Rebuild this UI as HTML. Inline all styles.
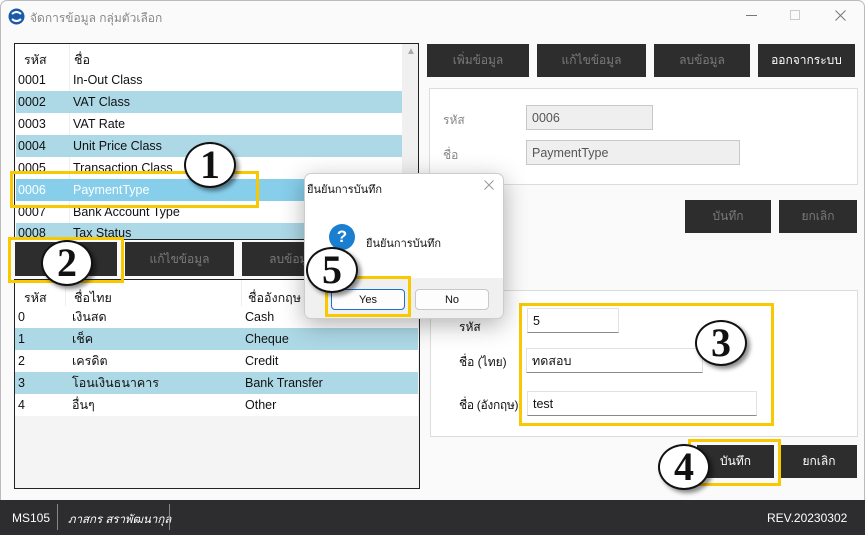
<!DOCTYPE html>
<html><head><meta charset="utf-8"><style>
*{box-sizing:border-box;margin:0;padding:0}
body{width:865px;height:535px;overflow:hidden;background:#fafafa;font-family:"Liberation Sans","Noto Sans CJK SC",sans-serif;font-size:12.5px;color:#111;position:relative}
.a{position:absolute}
.btn{position:absolute;background:#2d2d2d;color:#7a7a7a;display:flex;align-items:center;justify-content:center;font-size:12px}
.row{position:absolute;left:16px;height:22px;display:flex;align-items:center}
.c{position:absolute;white-space:nowrap}
.inp{position:absolute;background:#fff;border:1px solid #e2e2e2;border-bottom:1px solid #8a8a8a;padding-left:5px;display:flex;align-items:center;font-size:12.5px}
.dis{background:#efefef;border:1px solid #c8c8c8;color:#555}
.yb{position:absolute;border:3px solid #f8c800}
.num{position:absolute;width:52px;height:46px;border-radius:50%;background:#fff;border:2.5px solid #111;box-shadow:3px 3px 4px rgba(0,0,0,.45);font-family:"Liberation Serif",serif;font-weight:bold;font-size:40px;display:flex;align-items:center;justify-content:center;line-height:1}
</style></head><body>
<div class="a" style="left:0;top:0;width:865px;height:535px;border:1px solid #bbb;border-radius:7px 7px 0 0"></div>
<!-- title -->
<svg class="a" style="left:8px;top:8px" width="17" height="17" viewBox="0 0 17 17"><circle cx="8.5" cy="8.5" r="8" fill="#1a5aa8"/><path d="M4 6 Q8.5 2 13 6 M13 11 Q8.5 15 4 11" stroke="#fff" stroke-width="2" fill="none"/></svg>
<div class="c" style="left:30px;top:9px;color:#888;font-size:12px">จัดการข้อมูล กลุ่มตัวเลือก</div>
<div class="a" style="left:746px;top:15px;width:11px;height:1px;background:#777"></div>
<div class="a" style="left:790px;top:10px;width:10px;height:10px;border:1px solid #ccc"></div>
<svg class="a" style="left:835px;top:10px" width="11" height="11" viewBox="0 0 11 11"><path d="M0.5 0.5 L10.5 10.5 M10.5 0.5 L0.5 10.5" stroke="#777" stroke-width="1"/></svg>

<!-- top grid -->
<div class="a" style="left:14px;top:43px;width:405px;height:197px;border:1px solid #222;background:#fff;overflow:hidden">
 <div class="a" style="left:387px;top:0;width:17px;height:197px;background:#f0f0f0"></div>
 <div class="c" style="left:391px;top:2px;color:#aaa;font-size:10px">▲</div>
 <div class="a" style="left:54px;top:0;width:1px;height:197px;background:#eee"></div>
</div>
<div class="c" style="left:24px;top:50px">รหัส</div><div class="c" style="left:74px;top:50px">ชื่อ</div>
<div class="row" style="top:69px;width:386px"><span class="c" style="left:2px">0001</span><span class="c" style="left:57px">In-Out Class</span></div>
<div class="row" style="top:91px;width:386px;background:#add8e6"><span class="c" style="left:2px">0002</span><span class="c" style="left:57px">VAT Class</span></div>
<div class="row" style="top:113px;width:386px"><span class="c" style="left:2px">0003</span><span class="c" style="left:57px">VAT Rate</span></div>
<div class="row" style="top:135px;width:386px;background:#add8e6"><span class="c" style="left:2px">0004</span><span class="c" style="left:57px">Unit Price Class</span></div>
<div class="row" style="top:157px;width:386px"><span class="c" style="left:2px">0005</span><span class="c" style="left:57px">Transaction Class</span></div>
<div class="row" style="top:179px;width:386px;background:#87ceeb;color:#fff"><span class="c" style="left:2px">0006</span><span class="c" style="left:57px">PaymentType</span></div>
<div class="row" style="top:201px;width:386px"><span class="c" style="left:2px">0007</span><span class="c" style="left:57px">Bank Account Type</span></div>
<div class="row" style="top:223px;width:386px;height:16px;background:#add8e6;align-items:flex-start;overflow:hidden"><span class="c" style="left:2px;top:3px">0008</span><span class="c" style="left:57px;top:3px">Tax Status</span></div>

<div class="btn" style="left:15px;top:242px;width:102px;height:34px"></div>
<div class="btn" style="left:125px;top:242px;width:109px;height:34px">แก้ไขข้อมูล</div>
<div class="btn" style="left:242px;top:242px;width:100px;height:34px">ลบข้อมูล</div>

<!-- bottom grid -->
<div class="a" style="left:14px;top:279px;width:406px;height:210px;border:1px solid #222;background:#f4f4f4"></div>
<div class="a" style="left:15px;top:280px;width:404px;height:26px;background:#fff"></div>
<div class="a" style="left:65px;top:280px;width:1px;height:136px;background:#eee"></div>
<div class="a" style="left:241px;top:280px;width:1px;height:136px;background:#eee"></div>
<div class="c" style="left:24px;top:288px">รหัส</div><div class="c" style="left:74px;top:288px">ชื่อไทย</div><div class="c" style="left:248px;top:288px">ชื่ออังกฤษ</div>
<div class="row" style="left:15px;top:306px;width:403px;background:#fff"><span class="c" style="left:3px">0</span><span class="c" style="left:57px">เงินสด</span><span class="c" style="left:230px">Cash</span></div>
<div class="row" style="left:15px;top:328px;width:403px;background:#add8e6"><span class="c" style="left:3px">1</span><span class="c" style="left:57px">เช็ค</span><span class="c" style="left:230px">Cheque</span></div>
<div class="row" style="left:15px;top:350px;width:403px;background:#fff"><span class="c" style="left:3px">2</span><span class="c" style="left:57px">เครดิต</span><span class="c" style="left:230px">Credit</span></div>
<div class="row" style="left:15px;top:372px;width:403px;background:#add8e6"><span class="c" style="left:3px">3</span><span class="c" style="left:57px">โอนเงินธนาคาร</span><span class="c" style="left:230px">Bank Transfer</span></div>
<div class="row" style="left:15px;top:394px;width:403px;background:#fff"><span class="c" style="left:3px">4</span><span class="c" style="left:57px">อื่นๆ</span><span class="c" style="left:230px">Other</span></div>

<!-- right -->
<div class="btn" style="left:427px;top:44px;width:102px;height:33px">เพิ่มข้อมูล</div>
<div class="btn" style="left:537px;top:44px;width:109px;height:33px">แก้ไขข้อมูล</div>
<div class="btn" style="left:654px;top:44px;width:96px;height:33px">ลบข้อมูล</div>
<div class="btn" style="left:758px;top:44px;width:97px;height:33px;color:#fff">ออกจากระบบ</div>
<div class="a" style="left:429px;top:88px;width:429px;height:97px;border:1px solid #ddd;background:#fff"></div>
<div class="c" style="left:443px;top:111px;color:#888;font-size:12px">รหัส</div>
<div class="c" style="left:443px;top:146px;color:#888;font-size:12px">ชื่อ</div>
<div class="inp dis" style="left:526px;top:105px;width:127px;height:25px">0006</div>
<div class="inp dis" style="left:526px;top:140px;width:214px;height:25px">PaymentType</div>
<div class="btn" style="left:685px;top:200px;width:86px;height:33px">บันทึก</div>
<div class="btn" style="left:779px;top:200px;width:78px;height:33px">ยกเลิก</div>

<div class="a" style="left:430px;top:290px;width:428px;height:147px;border:1px solid #ddd;background:#fff"></div>
<div class="c" style="left:459px;top:318px;font-size:12px">รหัส</div>
<div class="c" style="left:459px;top:353px;font-size:12px">ชื่อ (ไทย)</div>
<div class="c" style="left:459px;top:396px;font-size:12px;letter-spacing:-0.3px">ชื่อ (อังกฤษ)</div>
<div class="inp" style="left:527px;top:308px;width:92px;height:25px">5</div>
<div class="inp" style="left:526px;top:348px;width:177px;height:25px">ทดสอบ</div>
<div class="inp" style="left:527px;top:391px;width:230px;height:25px">test</div>
<div class="yb" style="left:519px;top:303px;width:255px;height:123px"></div>
<div class="btn" style="left:697px;top:445px;width:77px;height:33px;color:#fff">บันทึก</div>
<div class="btn" style="left:781px;top:445px;width:76px;height:33px;color:#fff">ยกเลิก</div>
<div class="yb" style="left:688px;top:439px;width:93px;height:47px"></div>

<!-- status -->
<div class="a" style="left:0;top:500px;width:865px;height:35px;background:#2d2d30"></div>
<div class="c" style="left:12px;top:511px;color:#fff;font-size:12px">MS105</div>
<div class="a" style="left:57px;top:504px;width:1px;height:26px;background:#888"></div>
<div class="c" style="left:68px;top:511px;color:#fff;font-size:11.5px;font-style:italic">ภาสกร สราพัฒนากุล</div>
<div class="a" style="left:169px;top:504px;width:1px;height:26px;background:#888"></div>
<div class="c" style="left:767px;top:511px;color:#fff;font-size:12px">REV.20230302</div>

<!-- dialog -->
<div class="a" style="left:304px;top:173px;width:200px;height:146px;background:#fff;border:1px solid #ccc;border-radius:7px;box-shadow:0 6px 24px rgba(0,0,0,.3);overflow:hidden">
 <div class="a" style="left:0;top:104px;width:200px;height:42px;background:#f0f0f0"></div>
</div>
<div class="c" style="left:307px;top:180px;font-size:11px">ยืนยันการบันทึก</div>
<svg class="a" style="left:484px;top:180px" width="10" height="10" viewBox="0 0 10 10"><path d="M0.5 0.5 L9.5 9.5 M9.5 0.5 L0.5 9.5" stroke="#999" stroke-width="1"/></svg>
<div class="a" style="left:329px;top:224px;width:26px;height:26px;border-radius:50%;background:#1a7fd0;color:#fff;font-weight:bold;font-size:17px;display:flex;align-items:center;justify-content:center">?</div>
<div class="c" style="left:366px;top:234px;font-size:11px">ยืนยันการบันทึก</div>
<div class="a" style="left:331px;top:289px;width:74px;height:21px;border:1px solid #1a6fd0;border-radius:4px;background:#fdfdfd;font-size:11px;display:flex;align-items:center;justify-content:center">Yes</div>
<div class="a" style="left:415px;top:289px;width:74px;height:21px;border:1px solid #c8c8c8;border-radius:4px;background:#fdfdfd;font-size:11px;display:flex;align-items:center;justify-content:center">No</div>

<!-- annotations -->
<div class="yb" style="left:10px;top:171px;width:249px;height:37px"></div>
<div class="yb" style="left:8px;top:237px;width:116px;height:46px"></div>
<div class="yb" style="left:325px;top:276px;width:86px;height:41px"></div>
<div class="num" style="left:184px;top:142px">1</div>
<div class="num" style="left:41px;top:240px">2</div>
<div class="num" style="left:306px;top:247px">5</div>
<div class="num" style="left:695px;top:320px">3</div>
<div class="num" style="left:658px;top:444px">4</div>
</body></html>
